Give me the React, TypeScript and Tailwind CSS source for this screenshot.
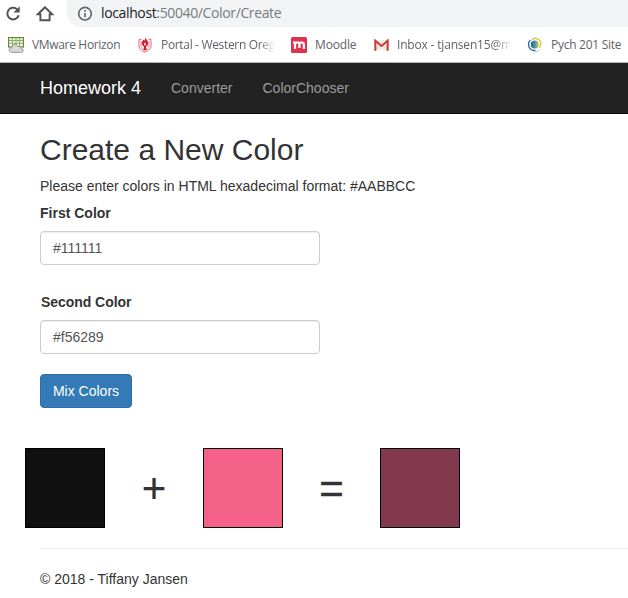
import type { ReactNode } from "react";

function ReloadIcon() {
  return (
    <svg width="16" height="16" viewBox="0 0 16 16" fill="none" stroke="#505357" strokeWidth="2">
      <path d="M13.700 9.200a5.800 5.800 0 1 1-1.500-5.700" />
      <path d="M14.700 .3v6.200H8.500z" fill="#505357" stroke="none" />
    </svg>
  );
}

function HomeIcon() {
  return (
    <svg width="18" height="16" viewBox="0 0 18 16" fill="none" stroke="#505357" strokeWidth="1.900">
      <path d="M1.800 8.200 9 1.200l7.200 7H13.600v6H4.400v-6z" />
    </svg>
  );
}

function InfoIcon() {
  return (
    <svg width="16" height="16" viewBox="0 0 16 16" fill="none" stroke="#5f6368" strokeWidth="1.600">
      <circle cx="8" cy="7.700" r="6.300" />
      <path d="M8 6.900v4.300M8 4v1.700" />
    </svg>
  );
}

function HorizonIcon() {
  return (
    <svg width="16" height="16" viewBox="0 0 16 16">
      <rect x=".6" y=".6" width="14.800" height="9.400" fill="#f4f8df" stroke="#66893f" strokeWidth="1.200" />
      <path d="M1 3.500h14M1 6.300h14M4.400 1v9M8 1v9M11.600 1v9" stroke="#8eaf59" strokeWidth="1" />
      <path d="M3.800 15.300c-3.500-.2-3.500-4.300-.4-4.500C4 7.200 8.800 6.600 10 9.500c2-.6 3.300.5 3.200 2 2.800.4 2.500 3.700.1 3.800z" fill="#d6d9d9" stroke="#858a8a" strokeWidth=".9" />
    </svg>
  );
}

function ShieldIcon() {
  return (
    <svg width="14" height="16" viewBox="0 0 14 16" fill="none">
      <path d="M3.500 2.300H1v6.500c0 3 2.300 5 6 6.400 3.700-1.400 6-3.400 6-6.400V2.300h-2.500" stroke="#df6876" strokeWidth="1" />
      <path d="M3 4v5c0 2 1.500 3.500 4 4.500 2.500-1 4-2.500 4-4.500V4" stroke="#df6876" strokeWidth=".8" />
      <path d="M7.300 0c.2 2 2.900 3.200 2.900 6 0 2-1 3-2.100 3.500L8.600 13H5.400L6 9.500C4.600 9 3.800 7.900 3.800 6.300c0-1.700 1-2.500 1.500-3.800l1 1.200C7.300 2.500 7.300 1.400 7.300 0z" fill="#d31d35" />
      <path d="M7 5.200 5.900 7.500 7 8.700l1.100-1.200z" fill="#fff" />
    </svg>
  );
}

function MoodleIcon() {
  return (
    <svg width="16" height="16" viewBox="0 0 16 16" fill="none">
      <rect width="16" height="16" rx="1.500" fill="#df304e" />
      <path d="M2.200 5.200c1.400 0 1.800.5 1.800 1.500V12m0-4.800c0-2.400 4.400-2.400 4.400.2V11m0-3.600c0-2.600 4.500-2.600 4.500.2V12" stroke="#fff" strokeWidth="2.200" />
    </svg>
  );
}

function GmailIcon() {
  return (
    <svg width="15" height="12" viewBox="0 0 16 12" fill="none">
      <path d="M1 .5h14v11H1z" fill="#f0eeeb" />
      <path d="m2 11 4.500-4.500M14 11 9.500 6.500" stroke="#cfcbc8" />
      <path d="M1.400 12V1.400L8 7l6.600-5.600V12" stroke="#c83e37" strokeWidth="2.200" />
    </svg>
  );
}

function SwirlIcon() {
  return (
    <svg width="16" height="16" viewBox="0 0 16 16" fill="none">
      <defs>
        <linearGradient id="globe" x1="0" y1="0" x2="1" y2="0">
          <stop stopColor="#1c609d" />
          <stop offset=".55" stopColor="#4d9aa0" />
          <stop offset="1" stopColor="#d6cf54" />
        </linearGradient>
      </defs>
      <circle cx="7.800" cy="7.600" r="4" fill="url(#globe)" />
      <path d="M3.500 3C.5 5.500 1 10.500 4 12.500c1.700 1 3.300 1 4.500.6" stroke="#2467a4" strokeWidth="1.300" />
      <path d="M5 2.800C8-.2 13.700 2 13.800 6.500c0 2-.6 3.500-1.600 4.500" stroke="#dccb42" strokeWidth="1.500" />
      <path d="M6 14.700c3 .7 5.500-.3 7-2.400" stroke="#80b5d4" strokeWidth=".7" />
    </svg>
  );
}

function Bookmark({ icon, className, textClass, children }: { icon: ReactNode; className: string; textClass: string; children: string }) {
  return (
    <a className={`flex shrink-0 items-center ${className}`}>
      <span className="flex w-4 shrink-0 justify-center">{icon}</span>
      <span className={`ml-2 overflow-hidden whitespace-nowrap ${textClass}`}>{children}</span>
    </a>
  );
}

function ColorField({ label, value, labelClass }: { label: string; value: string; labelClass: string }) {
  return (
    <div>
      <label className={`mb-2 block h-5 font-bold leading-5 ${labelClass}`}>{label}</label>
      <input
        defaultValue={value}
        className="block h-[34px] w-[280px] rounded-[4px] border border-[#ccc] bg-white px-3 py-1.5 text-sm text-[#555] shadow-[inset_0_1px_1px_rgba(0,0,0,0.075)] outline-none"
      />
    </div>
  );
}

export default function App() {
  return (
    <div className="h-[598px] w-[628px] overflow-hidden bg-white font-['Liberation_Sans',Arial,sans-serif] text-sm leading-5 text-[#333]">
      <div className="h-[63px] border-b border-[#b5b5b5] bg-white font-['Open_Sans',sans-serif]">
        <div className="flex h-[27px] items-center">
          <span className="ml-[5px]"><ReloadIcon /></span>
          <span className="ml-[15px]"><HomeIcon /></span>
          <div className="ml-[13px] flex h-[27px] flex-1 items-center rounded-bl-[14px] bg-[#f1f3f4] pl-[10px]">
            <InfoIcon />
            <span className="ml-2 whitespace-nowrap pb-px text-sm leading-5 tracking-[-0.37px] text-[#777b80]">
              <span className="text-[#202124]">localhost</span>:50040/Color/Create
            </span>
          </div>
        </div>
        <div className="flex h-[35px] items-center text-xs text-[#5f6368]">
          <Bookmark icon={<HorizonIcon />} className="ml-2" textClass="w-[98px] tracking-[-0.33px]">VMware Horizon</Bookmark>
          <Bookmark icon={<ShieldIcon />} className="ml-[7px]" textClass="w-[114px] mask-r-from-86% tracking-[-0.33px]">Portal - Western Oreg</Bookmark>
          <Bookmark icon={<MoodleIcon />} className="ml-4" textClass="w-[50px] tracking-[-0.15px]">Moodle</Bookmark>
          <Bookmark icon={<GmailIcon />} className="ml-2" textClass="w-[115px] mask-r-from-84% tracking-[-0.18px]">Inbox - tjansen15@m</Bookmark>
          <Bookmark icon={<SwirlIcon />} className="ml-[15px]" textClass="tracking-[-0.28px]">Pych 201 Site</Bookmark>
        </div>
      </div>

      <nav className="flex h-[51px] items-center border-b border-[#080808] bg-[#222] pl-10 text-[#9d9d9d]">
        <a className="w-[131px] text-lg text-white">Homework 4</a>
        <a className="w-[91.500px]">Converter</a>
        <a>ColorChooser</a>
      </nav>

      <main className="pt-[19px]">
        <div className="pl-10">
          <h2 className="h-[33px] text-[30px] leading-[33px]">Create a New Color</h2>
          <p className="mt-[10px] h-5">Please enter colors in HTML hexadecimal format: #AABBCC</p>
          <div className="mt-[7px] flex flex-col gap-[27px]">
            <ColorField label="First Color" value="#111111" labelClass="" />
            <ColorField label="Second Color" value="#f56289" labelClass="pl-px tracking-[-0.05px]" />
          </div>
          <button className="mt-5 block h-[34px] w-[92px] rounded-[4px] border border-[#2e6da4] bg-[#337ab7] text-white">Mix Colors</button>
        </div>
        <div className="mt-10 flex h-20 items-center pl-[25px] text-[42px] leading-[60px]">
          <div className="h-20 w-20 border border-black bg-[#111]" />
          <span className="w-[98px] pt-0.5 text-center [-webkit-text-stroke:0.2px_#333]">+</span>
          <div className="h-20 w-20 border border-black bg-[#f56289]" />
          <span className="w-[97px] pt-0.5 text-center [-webkit-text-stroke:0.5px_#333]">=</span>
          <div className="h-20 w-20 border border-black bg-[#83394d]" />
        </div>
        <hr className="ml-10 mt-5 border-[#eee]" />
        <footer className="mt-5 pl-10">© 2018 - Tiffany Jansen</footer>
      </main>
    </div>
  );
}
